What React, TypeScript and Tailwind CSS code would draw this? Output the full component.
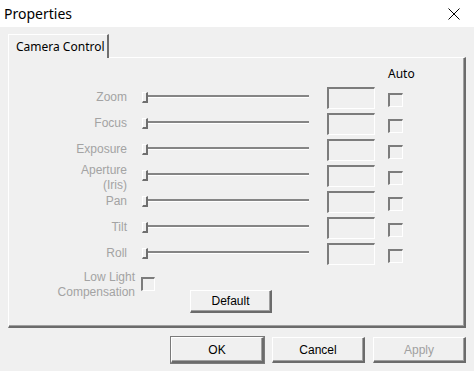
const rows = [
  { label: ["Zoom"] },
  { label: ["Focus"] },
  { label: ["Exposure"] },
  { label: ["Aperture", "(Iris)"] },
  { label: ["Pan"] },
  { label: ["Tilt"] },
  { label: ["Roll"] },
];

function Slider() {
  return (
    <div className="relative mt-[7px] h-[11px] w-[167px] shrink-0">
      <div className="absolute left-[5px] right-0 top-[3px] h-[3px] border-t-2 border-[#858585] border-b border-b-white" />
      <div className="absolute left-0 top-0 h-[11px] w-[6px] border-l border-t border-white border-r-2 border-r-[#6f6f6f] border-b-2 border-b-[#6f6f6f] bg-[#f0f0f0]" />
    </div>
  );
}

function SunkenBox({ className }: { className: string }) {
  return (
    <div
      className={`shrink-0 border-l-2 border-t-2 border-[#7c7c7c] border-r border-b border-r-white border-b-white bg-[#f0f0f0] ${className}`}
    />
  );
}

function Button({ label, className = "", disabled = false }: { label: string; className?: string; disabled?: boolean }) {
  return (
    <div
      className={`flex items-center justify-center border-l border-t border-white border-r-2 border-b-2 border-r-[#6b6b6b] border-b-[#6b6b6b] bg-[#f0f0f0] shadow-[inset_-1px_-1px_#a0a0a0] font-['Liberation_Sans',sans-serif] text-[12px] ${
        disabled ? "text-[#a0a0a0]" : "text-black"
      } ${className}`}
    >
      {label}
    </div>
  );
}

export default function App() {
  return (
    <div className="flex h-[371px] w-[474px] flex-col bg-[#f0f0f0] font-['Noto_Sans',sans-serif]">
      <div className="flex h-[27px] items-center justify-between bg-white pl-[4px] pr-[14px]">
        <span className="text-[14px] leading-none text-black">Properties</span>
        <svg width="12" height="12" viewBox="0 0 12 12" className="text-black">
          <path d="M0.5 0.5 L11.5 11.5 M11.5 0.5 L0.5 11.5" stroke="currentColor" strokeWidth="1" />
        </svg>
      </div>

      <div className="flex flex-col px-[8px] pt-[7px]">
        <div className="relative z-10 -mb-px flex h-[24px] w-[101px] items-center border-l border-t border-white border-r-2 border-r-[#6f6f6f] bg-[#f0f0f0] pl-[7px] text-[12px] text-black">
          Camera Control
        </div>

        <div className="flex h-[271px] flex-col border-l border-t border-white border-r-2 border-b-2 border-r-[#6b6b6b] border-b-[#6b6b6b] shadow-[inset_-1px_-1px_#a0a0a0]">
          <div className="h-[27px] pl-[379px] pt-[8px] text-[12px] leading-[15px] text-black">Auto</div>

          {rows.map((row) => (
            <div key={row.label[0]} className="flex h-[26px] items-start">
              <div
                className={`w-[118px] shrink-0 text-right font-['Liberation_Sans',sans-serif] text-[12px] leading-[15px] text-[#a3a3a3] ${
                  row.label.length > 1 ? "mt-0" : "mt-[5px]"
                }`}
              >
                {row.label.map((l) => (
                  <div key={l}>{l}</div>
                ))}
              </div>
              <div className="ml-[15px]">
                <Slider />
              </div>
              <SunkenBox className="ml-[18px] mt-[2px] h-[22px] w-[48px]" />
              <SunkenBox className="ml-[13px] mt-[8px] h-[14px] w-[15px]" />
            </div>
          ))}

          <div className="flex items-start">
            <div className="mt-[3px] w-[126px] shrink-0 text-right font-['Liberation_Sans',sans-serif] text-[12px] leading-[15px] text-[#a3a3a3]">
              <div>Low Light</div>
              <div>Compensation</div>
            </div>
            <SunkenBox className="ml-[6px] mt-[10px] h-[14px] w-[14px]" />
            <Button label="Default" className="ml-[35px] mt-[23px] h-[23px] w-[82px]" />
          </div>
        </div>

        <div className="mt-[9px] flex justify-end gap-[8px]">
          <Button label="OK" className="h-[26px] w-[93px] outline outline-1 outline-[#7a7a7a]" />
          <Button label="Cancel" className="h-[26px] w-[93px]" />
          <Button label="Apply" className="h-[26px] w-[93px]" disabled />
        </div>
      </div>
    </div>
  );
}
